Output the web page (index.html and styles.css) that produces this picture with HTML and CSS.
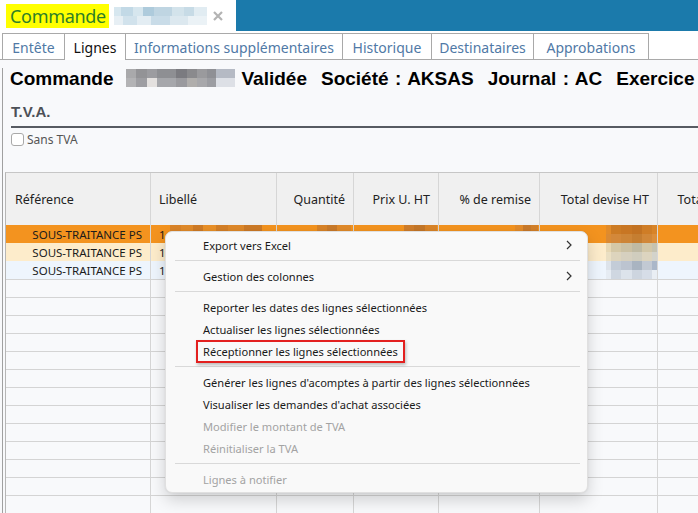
FILE: index.html
```html
<!DOCTYPE html>
<html lang="fr">
<head>
<meta charset="utf-8">
<title>Commande</title>
<link rel="stylesheet" href="styles.css">
</head>
<body>
<header class="titlebar">
  <div class="doc-title">
    <span class="mark">Commande</span>
    <span class="mosaic mosaic-title"></span>
    <svg class="close" viewBox="0 0 10 10" width="10" height="10"><path d="M1 1 L9 9 M9 1 L1 9" stroke="#b3b3b3" stroke-width="2.2" fill="none"/></svg>
  </div>
  <div class="appbar"></div>
</header>

<nav class="tabs">
  <div class="tab w-entete">Entête</div>
  <div class="tab w-lignes active">Lignes</div>
  <div class="tab w-infos">Informations supplémentaires</div>
  <div class="tab w-histo">Historique</div>
  <div class="tab w-dest">Destinataires</div>
  <div class="tab w-appro last">Approbations</div>
</nav>

<main class="panel">
  <h1 class="heading">
    <span>Commande</span>
    <span class="mosaic mosaic-num"></span>
    <span>Validée</span>
    <span class="ws">Société : AKSAS</span>
    <span class="ws">Journal : AC</span>
    <span>Exercice</span>
  </h1>
  <h2 class="section">T.V.A.</h2>
  <label class="check"><span class="box"></span>Sans TVA</label>

  <div class="grid">
    <div class="row head">
      <div class="c l first">Référence</div>
      <div class="c l">Libellé</div>
      <div class="c">Quantité</div>
      <div class="c">Prix U. HT</div>
      <div class="c">% de remise</div>
      <div class="c">Total devise HT</div>
      <div class="c">Total TTC</div>
      <div class="c"></div>
    </div>
    <div class="row sel">
      <div class="c">SOUS-TRAITANCE PS</div>
      <div class="c l">1<span class="mosaic m-lib-o"></span></div>
      <div class="c"><span class="mosaic m-q-o"></span></div>
      <div class="c"><span class="mosaic m-p-o"></span></div>
      <div class="c"><span class="mosaic m-r-o"></span></div>
      <div class="c flush"><span class="mosaic m-t-o"></span></div>
      <div class="c"></div>
      <div class="c"></div>
    </div>
    <div class="row alt">
      <div class="c">SOUS-TRAITANCE PS</div>
      <div class="c l">1</div>
      <div class="c"></div>
      <div class="c"></div>
      <div class="c"></div>
      <div class="c flush"><span class="mosaic m-t-c"></span></div>
      <div class="c"></div>
      <div class="c"></div>
    </div>
    <div class="row cur">
      <div class="c">SOUS-TRAITANCE PS</div>
      <div class="c l">1</div>
      <div class="c"></div>
      <div class="c"></div>
      <div class="c"></div>
      <div class="c flush"><span class="mosaic m-t-b"></span></div>
      <div class="c"></div>
      <div class="c"></div>
    </div>
    <div class="row empty"><div class="c"></div><div class="c"></div><div class="c"></div><div class="c"></div><div class="c"></div><div class="c"></div><div class="c"></div><div class="c"></div></div>
    <div class="row empty"><div class="c"></div><div class="c"></div><div class="c"></div><div class="c"></div><div class="c"></div><div class="c"></div><div class="c"></div><div class="c"></div></div>
    <div class="row empty"><div class="c"></div><div class="c"></div><div class="c"></div><div class="c"></div><div class="c"></div><div class="c"></div><div class="c"></div><div class="c"></div></div>
    <div class="row empty"><div class="c"></div><div class="c"></div><div class="c"></div><div class="c"></div><div class="c"></div><div class="c"></div><div class="c"></div><div class="c"></div></div>
    <div class="row empty"><div class="c"></div><div class="c"></div><div class="c"></div><div class="c"></div><div class="c"></div><div class="c"></div><div class="c"></div><div class="c"></div></div>
    <div class="row empty"><div class="c"></div><div class="c"></div><div class="c"></div><div class="c"></div><div class="c"></div><div class="c"></div><div class="c"></div><div class="c"></div></div>
    <div class="row empty"><div class="c"></div><div class="c"></div><div class="c"></div><div class="c"></div><div class="c"></div><div class="c"></div><div class="c"></div><div class="c"></div></div>
    <div class="row empty"><div class="c"></div><div class="c"></div><div class="c"></div><div class="c"></div><div class="c"></div><div class="c"></div><div class="c"></div><div class="c"></div></div>
    <div class="row empty"><div class="c"></div><div class="c"></div><div class="c"></div><div class="c"></div><div class="c"></div><div class="c"></div><div class="c"></div><div class="c"></div></div>
    <div class="row empty"><div class="c"></div><div class="c"></div><div class="c"></div><div class="c"></div><div class="c"></div><div class="c"></div><div class="c"></div><div class="c"></div></div>
    <div class="row empty"><div class="c"></div><div class="c"></div><div class="c"></div><div class="c"></div><div class="c"></div><div class="c"></div><div class="c"></div><div class="c"></div></div>
    <div class="row empty"><div class="c"></div><div class="c"></div><div class="c"></div><div class="c"></div><div class="c"></div><div class="c"></div><div class="c"></div><div class="c"></div></div>
    <div class="row empty"><div class="c"></div><div class="c"></div><div class="c"></div><div class="c"></div><div class="c"></div><div class="c"></div><div class="c"></div><div class="c"></div></div>
    <div class="row empty"><div class="c"></div><div class="c"></div><div class="c"></div><div class="c"></div><div class="c"></div><div class="c"></div><div class="c"></div><div class="c"></div></div>
  </div>
</main>

<div class="menu">
  <div class="mi">Export vers Excel<svg class="chev" viewBox="0 0 6 10" width="6" height="10"><path d="M1 1 L5 5 L1 9" stroke="#333" stroke-width="1.2" fill="none"/></svg></div>
  <div class="sep"></div>
  <div class="mi">Gestion des colonnes<svg class="chev" viewBox="0 0 6 10" width="6" height="10"><path d="M1 1 L5 5 L1 9" stroke="#333" stroke-width="1.2" fill="none"/></svg></div>
  <div class="sep"></div>
  <div class="mi">Reporter les dates des lignes sélectionnées</div>
  <div class="mi">Actualiser les lignes sélectionnées</div>
  <div class="mi"><span class="hl">Réceptionner les lignes sélectionnées</span></div>
  <div class="sep"></div>
  <div class="mi">Générer les lignes d'acomptes à partir des lignes sélectionnées</div>
  <div class="mi">Visualiser les demandes d'achat associées</div>
  <div class="mi off">Modifier le montant de TVA</div>
  <div class="mi off">Réinitialiser la TVA</div>
  <div class="sep"></div>
  <div class="mi off">Lignes à notifier</div>
</div>
</body>
</html>
```

FILE: styles.css
```css
* { box-sizing: border-box; }
html, body { margin: 0; padding: 0; }
body {
  width: 698px;
  height: 513px;
  overflow: hidden;
  position: relative;
  background: #f8f9fb;
  font-family: "Noto Sans", "Open Sans", sans-serif;
  color: #1b1b1b;
}

/* ---------- title bar ---------- */
.titlebar { display: flex; height: 31px; background: #fff; }
.doc-title { width: 236px; display: flex; align-items: center; padding-left: 6px; }
.mark {
  background: #ffff00;
  color: #2f7f27;
  font-size: 18px;
  letter-spacing: -0.3px;
  height: 24px;
  line-height: 24px;
  padding: 0 3px 0 4px;
  margin-top: 1px;
}
.mosaic { display: inline-block; flex: none; }
.mosaic-title {
  width: 93px;
  height: 18px;
  margin-left: 5px;
  background:
    linear-gradient(90deg, #d7e7ef 0 8%, #c2d9e6 8% 20%, #d6e6ee 20% 31%, #aecbdc 31% 43%, #bfd5e2 43% 62%, #d3e3eb 62% 75%, #c7dbe6 75% 86%, #e1ecf2 86% 100%) top / 100% 50% no-repeat,
    linear-gradient(90deg, #e7eff4 0 10%, #d1e2ec 10% 25%, #e3edf3 25% 40%, #c9dce8 40% 60%, #dce8ef 60% 80%, #ebf2f6 80% 100%) bottom / 100% 50% no-repeat;
}
.close { margin-left: 6px; }
.appbar { flex: 1; background: #1b7aab; }

/* ---------- tabs ---------- */
.tabs {
  display: flex;
  align-items: flex-end;
  height: 29px;
  padding-left: 2px;
  background: #fff;
  border-bottom: 1px solid #a9a9a9;
}
.tab {
  height: 26px;
  padding-top: 1px;
  border: 1px solid #a9a9a9;
  border-right: 0;
  border-bottom: 0;
  background: #fff;
  color: #5079a6;
  font-size: 14px;
  display: flex;
  align-items: center;
  justify-content: center;
  white-space: nowrap;
}
.tab.active { color: #111; height: 27px; margin-bottom: -1px; padding-top: 0; }
.tab.last { border-right: 1px solid #a9a9a9; }
.w-entete { width: 62px; }
.w-lignes { width: 61px; }
.w-infos { width: 217px; }
.w-histo { width: 89px; }
.w-dest { width: 102px; }
.w-appro { width: 116px; }

/* ---------- panel ---------- */
.panel {
  margin-left: 2px;
  height: 453px;
  border-left: 1px solid #a0a0a0;
}
.heading {
  margin: 8px 0 0 7px;
  display: flex;
  gap: 14px;
  white-space: nowrap;
  font: bold 19px/22px "Liberation Sans", Arial, sans-serif;
  color: #000;
}
.heading .ws { word-spacing: 1.2px; }
.mosaic-num {
  width: 109px;
  height: 18px;
  margin: 1px -8px 0 -1px;
  background:
    linear-gradient(90deg, #a9a9ab 0 9%, #939396 9% 19%, #9c9ca0 19% 28%, #8e8f93 28% 46%, #7b7b80 46% 56%, #8a8a8d 56% 65%, #9a9a9d 65% 74%, #8f9095 74% 83%, #b5bac4 83% 100%) top / 100% 50% no-repeat,
    linear-gradient(90deg, #b3b3b5 0 9%, #9e9ea2 9% 19%, #e4e1df 19% 28%, #a6a7ab 28% 46%, #9a9a9e 46% 56%, #b0aeac 56% 65%, #a8a8ab 65% 74%, #9c9da2 74% 83%, #dde0e6 83% 100%) bottom / 100% 50% no-repeat;
}
.section {
  margin: 13px 0 0 8px;
  padding-bottom: 5px;
  border-bottom: 2px solid #575b62;
  font: bold 15px/18px "Liberation Sans", Arial, sans-serif;
  color: #4c5057;
}
.check {
  margin: 5px 0 0 8px;
  height: 13px;
  display: flex;
  align-items: center;
  font-size: 12px;
  color: #555;
}
.check .box {
  width: 13px;
  height: 13px;
  margin-right: 3px;
  border: 1px solid #a9a9a9;
  border-radius: 3px;
  background: #fff;
}

/* ---------- grid ---------- */
.grid {
  margin: 26px 0 0 2px;
  border-top: 1px solid #c6c6c6;
  border-left: 1px solid #b6b6b6;
  font-size: 11.5px;
}
.row {
  display: grid;
  grid-template-columns: 145px 126px 77px 85px 101px 118px 82px 120px;
  height: 18px;
}
.row.head { height: 52px; background: #f0f0f0; font-size: 12.5px; color: #222; }
.row.sel { background: #f3931f; }
.row.alt { background: #fdeccb; }
.row.cur { background: #eef5fd; }
.row.empty { border-top: 1px solid #d4d4d4; }
.c {
  display: flex;
  align-items: center;
  justify-content: flex-end;
  padding-right: 8px;
  border-right: 1px solid #d6d6d6;
  white-space: nowrap;
  overflow: hidden;
}
.c.l { justify-content: flex-start; padding: 0 0 0 8px; }
.c.first { padding-left: 9px; }
.c.flush { padding-right: 0; }
.row .mosaic { align-self: stretch; }
.m-lib-o {
  width: 92px; margin-left: 4px;
  background: linear-gradient(90deg, #d98328 0 12%, #e08a2a 12% 25%, #cf7b26 25% 36%, #e99028 36% 50%, #d47f27 50% 63%, #de8829 63% 80%, #cc7a27 80% 100%);
}
.m-q-o { width: 34px; margin-right: -6px; background: linear-gradient(90deg, #d88328 0 30%, #c97a2a 30% 60%, #e08a2a 60% 100%); }
.m-p-o { width: 33px; margin-right: -7px; background: linear-gradient(90deg, #cf7d2b 0 30%, #c47729 30% 65%, #d98428 65% 100%); }
.m-r-o { width: 23px; margin-right: -7px; background: linear-gradient(90deg, #e38b2a 0 35%, #c97a2b 35% 70%, #d38029 70% 100%); }
.m-t-o {
  width: 51px;
  background:
    linear-gradient(90deg, #e18b2a 0 10%, #cc7b24 10% 30%, #c87623 30% 50%, #c27222 50% 70%, #cf7d26 70% 90%, #d88428 90% 100%) top / 100% 50% no-repeat,
    linear-gradient(90deg, #da8a34 0 10%, #d3883a 10% 30%, #cd8537 30% 50%, #c57e31 50% 70%, #d18738 70% 90%, #dc8e3a 90% 100%) bottom / 100% 50% no-repeat;
}
.m-t-c {
  width: 51px;
  background:
    linear-gradient(90deg, #e7d8b4 0 10%, #d4c8a7 10% 30%, #cbc1a4 30% 50%, #bfbaa3 50% 70%, #d2c7a8 70% 90%, #c6c3b0 90% 100%) top / 100% 50% no-repeat,
    linear-gradient(90deg, #eadfc3 0 10%, #ddd4bd 10% 30%, #d6d0bf 30% 50%, #d0cdbe 50% 70%, #dcd4bf 70% 90%, #d3d3cb 90% 100%) bottom / 100% 50% no-repeat;
}
.m-t-b {
  width: 51px;
  background:
    linear-gradient(90deg, #dde3ea 0 10%, #c3ccd7 10% 30%, #bcc4d0 30% 50%, #a9b4c1 50% 70%, #c2c9d3 70% 90%, #aab7c9 90% 100%) top / 100% 50% no-repeat,
    linear-gradient(90deg, #e6ecf3 0 10%, #cfd7e1 10% 30%, #dce3eb 30% 50%, #cdd5df 50% 70%, #d6dde7 70% 90%, #e9eef4 90% 100%) bottom / 100% 50% no-repeat;
}

/* ---------- context menu ---------- */
.menu {
  position: absolute;
  left: 165px;
  top: 231px;
  width: 423px;
  padding: 2px 0 2px;
  background: #f9f9f9;
  border: 1px solid #e0e0e0;
  border-radius: 7px;
  box-shadow: 0 7px 16px rgba(0, 0, 0, 0.17), 0 0 2px rgba(0, 0, 0, 0.08);
  font-size: 11.1px;
}
.mi {
  height: 22px;
  display: flex;
  align-items: center;
  padding: 0 15px 0 37px;
  color: #1a1a1a;
  white-space: nowrap;
}
.mi.off { color: #a3a3a3; }
.chev { margin-left: auto; }
.sep { height: 1px; margin: 4px 7px 4px 9px; background: #d9d9d9; }
.hl {
  height: 23px;
  display: flex;
  align-items: center;
  margin-left: -7px;
  padding: 0 5px;
  border: 2px solid #e3201f;
  box-shadow: 1px 2px 3px rgba(0, 0, 0, 0.25);
}
```
